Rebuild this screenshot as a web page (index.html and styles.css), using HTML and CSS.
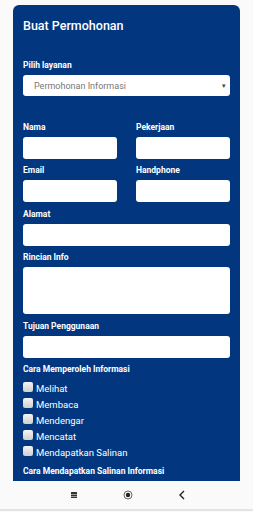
FILE: index.html
```html
<!DOCTYPE html>
<html>
<head>
    <title>Buat Permohonan</title>
    <link rel="stylesheet" href="styles.css">
</head>
<body>
    <div class="screen">
        <div class="panel">
            <h1 class="title">Buat Permohonan</h1>
            <form class="form">
                <label class="label" for="layanan">Pilih layanan</label>
                <div class="select">
                    <span>Permohonan Informasi</span>
                    <span class="caret">&#9662;</span>
                </div>

                <div class="row">
                    <div>
                        <label class="label">Nama</label>
                        <input type="text" class="input">
                    </div>
                    <div>
                        <label class="label">Pekerjaan</label>
                        <input type="text" class="input">
                    </div>
                    <div>
                        <label class="label">Email</label>
                        <input type="text" class="input">
                    </div>
                    <div>
                        <label class="label">Handphone</label>
                        <input type="text" class="input">
                    </div>
                </div>

                <label class="label">Alamat</label>
                <input type="text" class="input">

                <label class="label">Rincian Info</label>
                <textarea class="input area"></textarea>

                <label class="label">Tujuan Penggunaan</label>
                <input type="text" class="input">

                <label class="label">Cara Memperoleh Informasi</label>
                <ul class="checks">
                    <li><span class="box"></span>Melihat</li>
                    <li><span class="box"></span>Membaca</li>
                    <li><span class="box"></span>Mendengar</li>
                    <li><span class="box"></span>Mencatat</li>
                    <li><span class="box"></span>Mendapatkan Salinan</li>
                </ul>

                <label class="label">Cara Mendapatkan Salinan Informasi</label>
            </form>
        </div>
        <div class="navbar">
            <svg width="8" height="8" viewBox="0 0 8 8">
                <rect x="1" y="1" width="6" height="6" fill="#333"/>
                <rect x="1" y="3" width="6" height="0.7" fill="#ccc"/>
                <rect x="1" y="5" width="6" height="0.7" fill="#ccc"/>
            </svg>
            <svg width="10" height="10" viewBox="0 0 10 10">
                <circle cx="5" cy="5" r="4" fill="none" stroke="#666" stroke-width="1"/>
                <circle cx="5" cy="5" r="2.2" fill="#222"/>
            </svg>
            <svg width="8" height="10" viewBox="0 0 8 10">
                <path d="M6 1 L2 5 L6 9" fill="none" stroke="#222" stroke-width="1.4"/>
            </svg>
        </div>
    </div>
</body>
</html>
```

FILE: styles.css
```css
body {
    margin: 0;
    background-color: #fafafa;
    font-family: Roboto, "Liberation Sans", sans-serif;
}
.screen {
    width: 253px;
    height: 512px;
    display: flex;
    flex-direction: column;
    overflow: hidden;
}
.panel {
    margin: 5px 13px 0 13px;
    height: 476px;
    flex-shrink: 0;
    background-color: #023780;
    border-radius: 6px 6px 0 0;
    padding: 0 10px;
    overflow: hidden;
    box-sizing: border-box;
}
.title {
    color: white;
    font-size: 12.5px;
    font-weight: 500;
    margin: 0;
    padding-top: 13px;
    line-height: 16px;
}
.form {
    display: flex;
    flex-direction: column;
    margin-top: 26px;
}
.label {
    display: block;
    color: white;
    font-size: 8.5px;
    font-weight: bold;
    line-height: 11px;
    margin-bottom: 4px;
}
.select {
    height: 21px;
    background: white;
    border-radius: 3px;
    display: flex;
    align-items: center;
    justify-content: space-between;
    padding: 0 4px 0 11px;
    color: #777;
    font-size: 9px;
}
.caret {
    font-size: 7px;
    color: #444;
}
.row {
    display: grid;
    grid-template-columns: 1fr 1fr;
    column-gap: 19px;
    margin-top: 26px;
}
.input {
    display: block;
    width: 100%;
    height: 22px;
    box-sizing: border-box;
    border: none;
    border-radius: 3px;
    background: white;
    margin: 0 0 6.4px 0;
    padding: 0;
}
.area {
    height: 47px;
    resize: none;
}
.checks {
    list-style: none;
    margin: 2px 0 5px 0;
    padding: 0;
}
.checks li {
    display: flex;
    align-items: center;
    color: white;
    font-size: 9.5px;
    height: 16px;
}
.box {
    width: 10px;
    height: 10px;
    border-radius: 2px;
    background: linear-gradient(#f4f4f4, #cfcfcf);
    margin-right: 3px;
    position: relative;
    top: -2px;
}
.navbar {
    height: 28px;
    flex-shrink: 0;
    display: flex;
    align-items: center;
    justify-content: center;
    gap: 45px;
    background-color: #fafafa;
    border-bottom: 2px solid #e4e4e4;
    padding-left: 2px;
}
```
